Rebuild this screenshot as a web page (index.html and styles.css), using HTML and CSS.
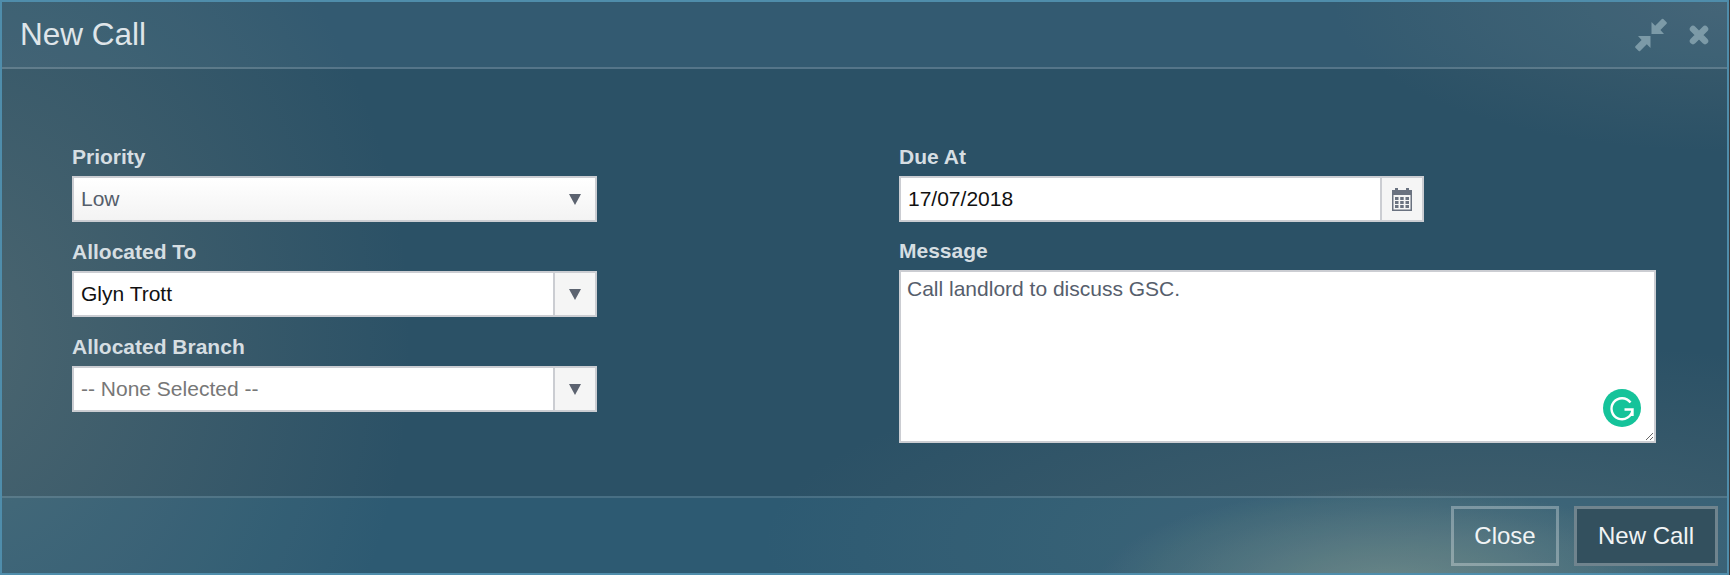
FILE: index.html
```html
<!DOCTYPE html>
<html lang="en">
<head>
<meta charset="utf-8">
<title>New Call</title>
<link rel="stylesheet" href="styles.css">
</head>
<body>
<div class="modal">
  <header class="modal-head">
    <h1 class="title">New Call</h1>
    <div class="head-icons">
      <svg class="icon-compress" viewBox="0 0 34 36" aria-hidden="true"><path d="M17.500 17V5l3.700 3.700L27.900 2a1 1 0 0 1 1.400 0l3.300 3.300a1 1 0 0 1 0 1.400L26.400 12.900 30 17zM16.500 19v12l-3.700-3.700L6.100 34a1 1 0 0 1-1.400 0l-3.300-3.300a1 1 0 0 1 0-1.400l6.200-6.200L4 19z"/></svg>
      <svg class="icon-close" viewBox="0 0 20 20" aria-hidden="true"><path d="M4 4 16 16M16 4 4 16"/></svg>
    </div>
  </header>
  <main class="modal-body">
    <section class="col col-left">
      <div class="field">
        <div class="label">Priority</div>
        <div class="control select-plain">
          <span class="value muted">Low</span>
          <span class="arrow"></span>
        </div>
      </div>
      <div class="field">
        <div class="label">Allocated To</div>
        <div class="control">
          <span class="value">Glyn Trott</span>
          <span class="addon"><span class="arrow"></span></span>
        </div>
      </div>
      <div class="field">
        <div class="label">Allocated Branch</div>
        <div class="control">
          <span class="value placeholder">-- None Selected --</span>
          <span class="addon"><span class="arrow"></span></span>
        </div>
      </div>
    </section>
    <section class="col col-right">
      <div class="field">
        <div class="label">Due At</div>
        <div class="control date">
          <span class="value">17/07/2018</span>
          <span class="addon">
            <svg class="icon-cal" viewBox="0 0 22 24" aria-hidden="true"><path d="M1 3h3V1h3v2h8V1h3v2h3v21H1z"/><path fill="#f5f5f5" d="M2.500 8h17v14.500h-17z"/><path d="M4 10h3.500v3H4zM9.200 10h3.500v3H9.200zM14.500 10H18v3h-3.500zM4 14h3.500v3H4zM9.200 14h3.500v3H9.200zM14.500 14H18v3h-3.500zM4 18h3.500v3H4zM9.200 18h3.500v3H9.200zM14.500 18H18v3h-3.500z"/></svg>
          </span>
        </div>
      </div>
      <div class="field field-message">
        <div class="label">Message</div>
        <div class="message-wrap">
          <textarea class="message" spellcheck="false">Call landlord to discuss GSC.</textarea>
          <span class="grammarly">
            <svg viewBox="0 0 38 38" aria-hidden="true"><circle cx="19" cy="19" r="19" fill="#15c39a"/><path d="M27.500 13.500A10.500 10.500 0 1 0 29.500 20.500H21.500M29.500 20.500v6.500" fill="none" stroke="#fff" stroke-width="2.400"/></svg>
          </span>
        </div>
      </div>
    </section>
  </main>
  <footer class="modal-foot">
    <button class="btn btn-close" type="button">Close</button>
    <button class="btn btn-primary" type="button">New Call</button>
  </footer>
</div>
</body>
</html>
```

FILE: styles.css
```css
* { box-sizing: border-box; }
html, body { margin: 0; padding: 0; }
body {
  width: 1730px;
  height: 575px;
  overflow: hidden;
  background: #3a3a3e;
  font-family: "Liberation Sans", Arial, sans-serif;
}
.modal {
  width: 1729px;
  height: 575px;
  display: flex;
  flex-direction: column;
  border: 2px solid #4f8dab;
  background:
    radial-gradient(ellipse 300px 105px at 1390px 590px, rgba(150,160,140,.6), rgba(150,160,140,0) 100%),
    radial-gradient(ellipse 460px 560px at -50px 340px, rgba(120,130,125,.42), rgba(120,130,125,0) 100%),
    radial-gradient(ellipse 720px 200px at 1480px 540px, rgba(110,125,125,.33), rgba(110,125,125,0) 100%),
    radial-gradient(ellipse 400px 150px at 1730px 0, rgba(110,125,130,.28), rgba(110,125,130,0) 100%),
    #2b5166;
}
.modal-head {
  height: 67px;
  flex: none;
  display: flex;
  align-items: center;
  justify-content: space-between;
  padding: 0 18px 0 18px;
  background: rgba(150,200,240,.08);
  border-bottom: 2px solid rgba(255,255,255,.17);
}
.title {
  margin: 0;
  font-size: 31.5px;
  font-weight: 400;
  color: #dfe5e9;
}
.head-icons {
  display: flex;
  align-items: center;
  gap: 21px;
}
.icon-compress { width: 34px; height: 36px; fill: #7c9aa7; display: block; }
.icon-close { width: 20px; height: 20px; fill: none; stroke: #7c9aa7; stroke-width: 6.5px; stroke-linecap: round; display: block; }
.modal-body {
  flex: 1;
  display: flex;
  padding: 75px 0 0 70px;
}
.col { display: flex; flex-direction: column; gap: 17px; }
.col-left { width: 525px; margin-right: 302px; }
.col-right { width: 757px; }
.label {
  font-size: 21px;
  line-height: 25px;
  font-weight: 700;
  color: #d6dee2;
  margin-bottom: 7px;
}
.control {
  height: 46px;
  display: flex;
  align-items: center;
  background: #fff;
  border: 2px solid #cbcdd2;
  font-size: 21px;
  color: #111;
}
.select-plain {
  justify-content: space-between;
  background: linear-gradient(#fff, #f3f3f3);
  padding-right: 14px;
}
.value { flex: 1; padding-left: 7px; }
.muted { color: #555e6b; }
.placeholder { color: #777; }
.addon {
  width: 42px;
  height: 100%;
  flex: none;
  display: flex;
  align-items: center;
  justify-content: center;
  background: #f5f5f5;
  border-left: 2px solid #cbcdd2;
}
.arrow {
  width: 0;
  height: 0;
  border-left: 6px solid transparent;
  border-right: 6px solid transparent;
  border-top: 11px solid #5c6370;
}
.icon-cal { width: 22px; height: 24px; fill: #6a7280; display: block; }
.date { width: 525px; }
.field-message { margin-top: -1px; }
.message-wrap { position: relative; height: 173px; }
.message {
  display: block;
  width: 757px;
  height: 173px;
  margin: 0;
  padding: 5px 6px;
  background: #fff;
  border: 2px solid #cbcdd2;
  border-radius: 0;
  outline: none;
  font-family: inherit;
  font-size: 21px;
  line-height: 24px;
  color: #565e6c;
}
.grammarly {
  position: absolute;
  right: 15px;
  bottom: 16px;
  width: 38px;
  height: 38px;
}
.grammarly svg { display: block; width: 38px; height: 38px; }
.modal-foot {
  height: 77px;
  flex: none;
  display: flex;
  justify-content: flex-end;
  gap: 15px;
  padding: 8px 9px 0 0;
  background: rgba(70,180,230,.1);
  border-top: 2px solid rgba(255,255,255,.13);
}
.btn {
  height: 60px;
  font-family: inherit;
  font-size: 24px;
  color: #f1f4f5;
  border: 3px solid rgba(255,255,255,.3);
  padding: 0;
  background: transparent;
}
.btn-close { width: 108px; }
.btn-primary { width: 144px; background: #33505e; }
```
